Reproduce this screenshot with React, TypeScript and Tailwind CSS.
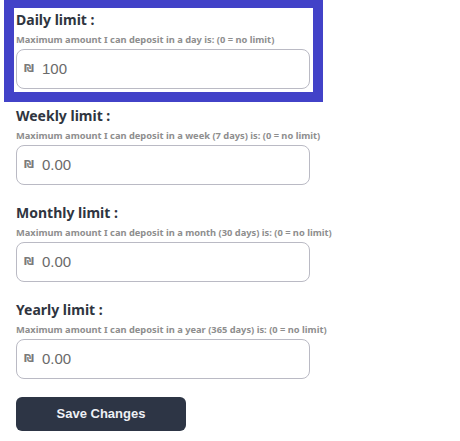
const limits = [
  { title: 'Daily limit :', sub: 'Maximum amount I can deposit in a day is: (0 = no limit)', value: '100' },
  { title: 'Weekly limit :', sub: 'Maximum amount I can deposit in a week (7 days) is: (0 = no limit)', value: '0.00' },
  { title: 'Monthly limit :', sub: 'Maximum amount I can deposit in a month (30 days) is: (0 = no limit)', value: '0.00' },
  { title: 'Yearly limit :', sub: 'Maximum amount I can deposit in a year (365 days) is: (0 = no limit)', value: '0.00' },
];

const LimitField = ({ title, sub, value }: { title: string; sub: string; value: string }) => {
  return (
    <div className="w-[294px]">
      <h3 className="text-[14px] leading-5 font-bold text-[#2f3540] font-['Noto_Sans',sans-serif]">{title}</h3>
      <p className="mt-[3px] text-[9.3px] leading-[14px] font-bold text-[#8e8e8e] whitespace-nowrap font-['Noto_Sans',sans-serif]">
        {sub}
      </p>
      <div className="mt-[2px] h-10 flex items-center rounded-lg border border-[#babac4] bg-white pl-[7px]">
        <span className="text-[11px] font-bold text-[#7a7a7a] font-['DejaVu_Sans',sans-serif]">₪</span>
        <span className="ml-[8px] text-[15px] text-[#6a6a6a] font-['Liberation_Sans',Arial,sans-serif]">{value}</span>
      </div>
    </div>
  );
};

const App = () => {
  const [daily, ...rest] = limits;
  return (
    <div className="bg-white min-h-[441px] pl-1">
      <div className="w-[319px] border-[10px] border-t-8 border-[#4242c8] pt-[2px] pb-[3px] pl-[2px] pr-[3px]">
        <LimitField {...daily} />
      </div>
      <div className="pl-3 mt-1 flex flex-col gap-[18px]">
        {rest.map((l) => (
          <LimitField key={l.title} {...l} />
        ))}
        <button className="w-[170px] h-[34px] rounded-md bg-[#2d3545] text-[13px] font-bold text-[#eef0f5] font-['Liberation_Sans',Arial,sans-serif]">
          Save Changes
        </button>
      </div>
    </div>
  );
};

export default App;
